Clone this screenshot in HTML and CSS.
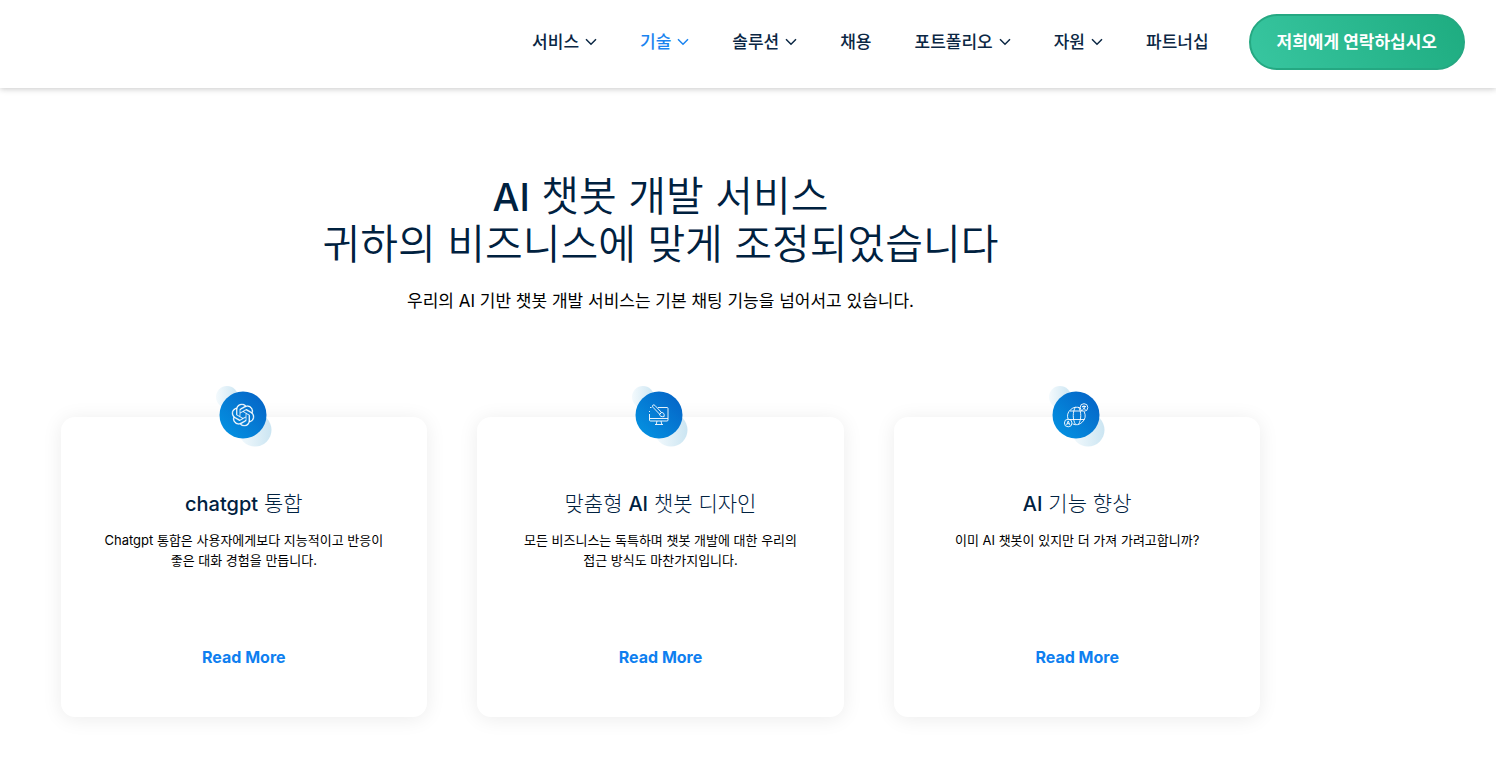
FILE: index.html
```html
<!DOCTYPE html>
<html lang="ko">
<head>
  <meta charset="UTF-8">
  <meta name="viewport" content="width=device-width, initial-scale=1">
  <title>AI 챗봇 개발 서비스</title>
  <link rel="stylesheet" href="styles.css">
</head>
<body>
  <header class="site-header">
    <nav class="main-nav">
      <a href="#">서비스 <svg class="chevron" viewBox="0 0 12 8"><path d="M1 1.2l5 5 5-5"/></svg></a>
      <a href="#" class="active">기술 <svg class="chevron" viewBox="0 0 12 8"><path d="M1 1.2l5 5 5-5"/></svg></a>
      <a href="#">솔루션 <svg class="chevron" viewBox="0 0 12 8"><path d="M1 1.2l5 5 5-5"/></svg></a>
      <a href="#">채용</a>
      <a href="#">포트폴리오 <svg class="chevron" viewBox="0 0 12 8"><path d="M1 1.2l5 5 5-5"/></svg></a>
      <a href="#">자원 <svg class="chevron" viewBox="0 0 12 8"><path d="M1 1.2l5 5 5-5"/></svg></a>
      <a href="#">파트너십</a>
    </nav>
    <a href="#" class="contact-btn">저희에게 연락하십시오</a>
  </header>

  <!-- shared gradients for the card icons -->
  <svg class="defs" width="0" height="0" aria-hidden="true">
    <defs>
      <linearGradient id="disc" x1="0" y1="1" x2="1" y2="0">
        <stop offset="0" stop-color="#0496e4"/>
        <stop offset="1" stop-color="#0560c4"/>
      </linearGradient>
      <linearGradient id="bubble" x1="0" y1="0" x2="1" y2="0">
        <stop offset="0" stop-color="#f4fafd"/>
        <stop offset="1" stop-color="#cbe5f2"/>
      </linearGradient>
    </defs>
  </svg>

  <main class="services">
    <div class="container">
      <h1><span class="latin">AI</span> 챗봇 개발 서비스<br>귀하의 비즈니스에 맞게 조정되었습니다</h1>
      <p class="intro">우리의 AI 기반 챗봇 개발 서비스는 기본 채팅 기능을 넘어서고 있습니다.</p>

      <div class="cards">
        <article class="card">
          <svg class="card-icon" viewBox="0 0 60 62">
            <circle cx="14" cy="12" r="11" fill="url(#bubble)"/>
            <circle cx="42" cy="45" r="16.5" fill="url(#bubble)"/>
            <circle cx="30" cy="30" r="23.5" fill="url(#disc)"/>
            <svg x="18.5" y="18.5" width="23" height="23" viewBox="0 0 24 24">
              <path fill="#fff" stroke="#047bd3" stroke-width=".3" d="M22.2819 9.8211a5.9847 5.9847 0 0 0-.5157-4.9108 6.0462 6.0462 0 0 0-6.5098-2.9A6.0651 6.0651 0 0 0 4.9807 4.1818a5.9847 5.9847 0 0 0-3.9977 2.9 6.0462 6.0462 0 0 0 .7427 7.0966 5.98 5.98 0 0 0 .511 4.9107 6.051 6.051 0 0 0 6.5146 2.9001A5.9847 5.9847 0 0 0 13.2599 24a6.0557 6.0557 0 0 0 5.7718-4.2058 5.9894 5.9894 0 0 0 3.9977-2.9001 6.0557 6.0557 0 0 0-.7475-7.0729zm-9.022 12.6081a4.4755 4.4755 0 0 1-2.8764-1.0408l.1419-.0804 4.7783-2.7582a.7948.7948 0 0 0 .3927-.6813v-6.7369l2.02 1.1686a.071.071 0 0 1 .038.052v5.5826a4.504 4.504 0 0 1-4.4945 4.4944zm-9.6607-4.1254a4.4708 4.4708 0 0 1-.5346-3.0137l.142.0852 4.783 2.7582a.7712.7712 0 0 0 .7806 0l5.8428-3.3685v2.3324a.0804.0804 0 0 1-.0332.0615L9.74 19.9502a4.4992 4.4992 0 0 1-6.1408-1.6464zM2.3408 7.8956a4.485 4.485 0 0 1 2.3655-1.9728V11.6a.7664.7664 0 0 0 .3879.6765l5.8144 3.3543-2.0201 1.1685a.0757.0757 0 0 1-.071 0l-4.8303-2.7865A4.504 4.504 0 0 1 2.3408 7.872zm16.5963 3.8558L13.1038 8.364 15.1192 7.2a.0757.0757 0 0 1 .071 0l4.8303 2.7913a4.4944 4.4944 0 0 1-.6765 8.1042v-5.6772a.79.79 0 0 0-.407-.667zm2.0107-3.0231l-.142-.0852-4.7735-2.7818a.7759.7759 0 0 0-.7854 0L9.409 9.2297V6.8974a.0662.0662 0 0 1 .0284-.0615l4.8303-2.7866a4.4992 4.4992 0 0 1 6.6802 4.66zM8.3065 12.863l-2.02-1.1638a.0804.0804 0 0 1-.038-.0567V6.0742a4.4992 4.4992 0 0 1 7.3757-3.4537l-.142.0805L8.704 5.459a.7948.7948 0 0 0-.3927.6813zm1.0976-2.3654l2.602-1.4998 2.6069 1.4998v2.9994l-2.5974 1.4997-2.6067-1.4997Z"/>
            </svg>
          </svg>
          <h2><span class="latin">chatgpt</span> 통합</h2>
          <p>Chatgpt 통합은 사용자에게보다 지능적이고 반응이 좋은 대화 경험을 만듭니다.</p>
          <a href="#" class="read-more">Read More</a>
        </article>

        <article class="card">
          <svg class="card-icon" viewBox="0 0 60 62">
            <circle cx="14" cy="12" r="11" fill="url(#bubble)"/>
            <circle cx="42" cy="45" r="16.5" fill="url(#bubble)"/>
            <circle cx="30" cy="30" r="23.5" fill="url(#disc)"/>
            <g class="lines">
              <path d="M29 22.5h9q1 0 1 1V35q0 1-1 1H21.500q-1 0-1-1v-6M20.500 27v-1M21 22.500h1.500M20.500 33.500H39M28 36l-.8 3.500M32 36l.8 3.500M26 39.500h8"/>
              <path d="M23.800 20.200q1.100-.9 2.100.2l6.600 7.100-1.900 1.700-6.700-7q-.9-1-.1-2zM30.600 29.200l1.900-1.700c2.200 0 3 1.300 2.600 4.100-2.700.4-4.400-.3-4.500-2.400z"/>
            </g>
          </svg>
          <h2>맞춤형 <span class="latin">AI</span> 챗봇 디자인</h2>
          <p>모든 비즈니스는 독특하며 챗봇 개발에 대한 우리의 접근 방식도 마찬가지입니다.</p>
          <a href="#" class="read-more">Read More</a>
        </article>

        <article class="card">
          <svg class="card-icon" viewBox="0 0 60 62">
            <circle cx="14" cy="12" r="11" fill="url(#bubble)"/>
            <circle cx="42" cy="45" r="16.5" fill="url(#bubble)"/>
            <circle cx="30" cy="30" r="23.5" fill="url(#disc)"/>
            <g class="lines">
              <path d="M34.500 23.200A9 9 0 0 0 22.200 34.500M26.500 38.900A9 9 0 0 0 38.300 27M24 26h12.500M22.500 34.500h16"/>
              <path d="M29.500 21.900c-3 5-3 12.500 0 17.500M32.500 21.900c3 5 3 12.500 0 17.500"/>
              <circle cx="38" cy="22.500" r="3.800"/>
              <circle cx="22.200" cy="38" r="3.800"/>
              <path d="M36 21.500h4M38 20.300v1.200M36.500 24.500q2.500-.9 2.700-3M36.800 22.300q.9 1.700 2.700 2.200M20.600 39.900l1.600-4 1.600 4M21.200 38.700h2"/>
            </g>
          </svg>
          <h2><span class="latin">AI</span> 기능 향상</h2>
          <p>이미 AI 챗봇이 있지만 더 가져 가려고합니까?</p>
          <a href="#" class="read-more">Read More</a>
        </article>
      </div>
    </div>
  </main>
</body>
</html>
```
FILE: styles.css
```css
* {
  box-sizing: border-box;
}
body {
  margin: 0;
  background: #fff;
  color: #000;
  font-family: Inter, 'Noto Sans CJK KR', sans-serif;
  word-break: keep-all;
}
a {
  text-decoration: none;
}
.defs {
  position: absolute;
}
.site-header {
  display: flex;
  justify-content: flex-end;
  align-items: center;
  gap: 40px;
  padding: 14px 31px 18px;
  box-shadow: 0 1px 6px rgba(0, 0, 0, 0.22);
}
.main-nav {
  display: flex;
  align-items: center;
  gap: 43px;
}
.main-nav a {
  display: flex;
  align-items: center;
  gap: 6px;
  color: #0b2744;
  font-size: 17px;
  font-weight: 500;
  line-height: 24px;
}
.main-nav a.active {
  color: #1a84f0;
}
.chevron {
  width: 12px;
  height: 8px;
  fill: none;
  stroke: currentColor;
  stroke-width: 1.5;
}
.contact-btn {
  padding: 14px 26px;
  border: 2px solid #25a882;
  border-radius: 28px;
  background: linear-gradient(60deg, #38c6a0, #1eac80);
  color: #fff;
  font-size: 17px;
  font-weight: 700;
  line-height: 24px;
}
.services {
  margin-right: 175px;
  padding: 84px 20px 42px;
}
.container {
  max-width: 1200px;
  margin: 0 auto;
  text-align: center;
}
h1 {
  margin: 0;
  color: #00213f;
  font-size: 41px;
  font-weight: 350;
  line-height: 48px;
}
/* Hangul is set light in the headings, Latin words stay medium */
.latin {
  font-size: 38px;
  font-weight: 500;
  line-height: 1;
}
.intro {
  margin: 20px 0 0;
  font-size: 17px;
  line-height: 26px;
}
.cards {
  display: grid;
  grid-template-columns: repeat(3, 1fr);
  gap: 50px;
  margin-top: 103px;
}
.card {
  position: relative;
  display: flex;
  flex-direction: column;
  align-items: center;
  min-height: 300px;
  padding: 73px 40px 48px;
  border-radius: 14px;
  background: #fff;
  box-shadow: 0 2px 20px rgba(0, 0, 0, 0.08);
}
/* sits across the top edge of the card */
.card-icon {
  position: absolute;
  top: -32px;
  left: calc(50% - 31px);
  width: 60px;
  height: 62px;
}
.lines {
  fill: none;
  stroke: #fff;
  stroke-width: 0.9;
}
.card h2 {
  margin: 0;
  color: #00213f;
  font-size: 21px;
  font-weight: 300;
  line-height: 28px;
}
.card .latin {
  font-size: 20px;
}
.card p {
  margin: 12px 0 0;
  font-size: 13px;
  line-height: 20px;
}
.read-more {
  margin-top: auto;
  color: #0f7ff0;
  font-size: 16px;
  font-weight: 700;
  line-height: 24px;
}
```
